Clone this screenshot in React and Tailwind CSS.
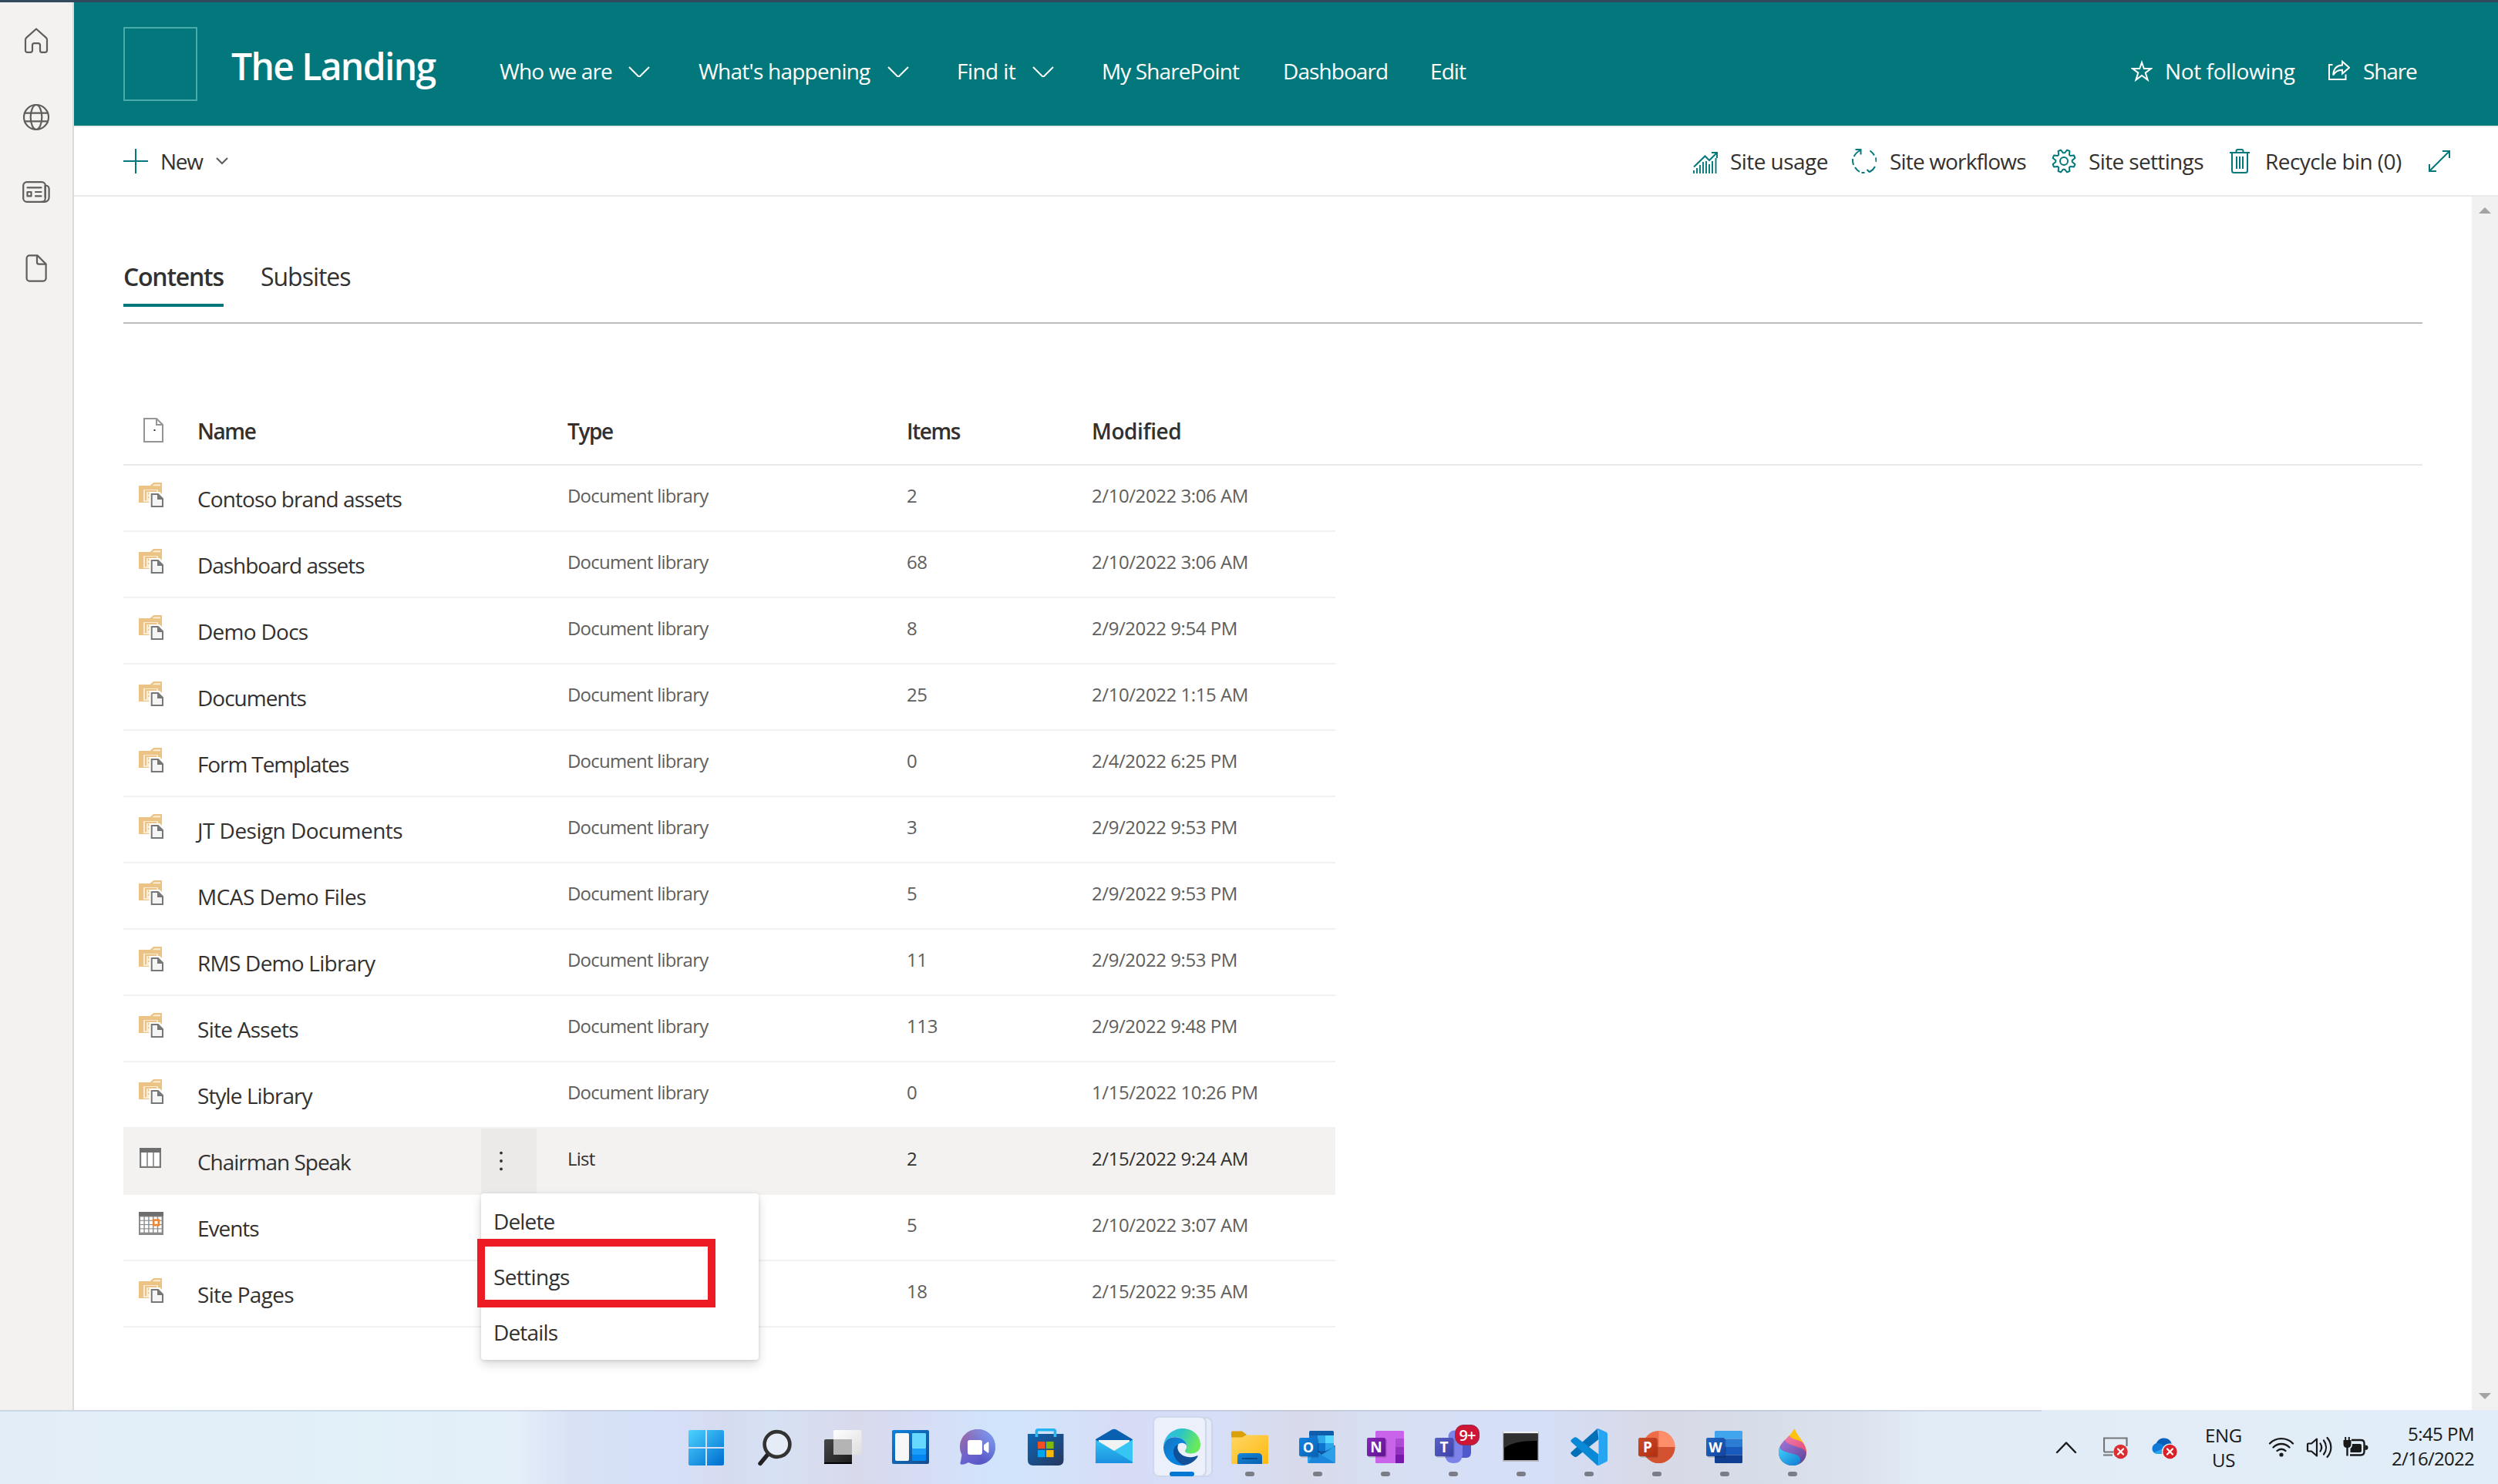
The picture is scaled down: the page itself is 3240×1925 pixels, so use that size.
const NAV = [
  { label: "Who we are", width: "w-[167px]", chevron: true, tail: "mr-[63px]", tracking: "tracking-[-0.031em]" },
  { label: "What's happening", width: "w-[245px]", chevron: true, tail: "mr-[62px]", tracking: "tracking-[-0.027em]" },
  { label: "Find it", width: "w-[98px]", chevron: true, tail: "mr-[62px]", tracking: "tracking-[-0.02em]" },
  { label: "My SharePoint", width: "w-[235px]", tracking: "tracking-[-0.032em]" },
  { label: "Dashboard", width: "w-[191px]", tracking: "tracking-[-0.033em]" },
  { label: "Edit", width: "w-[60px]", tracking: "tracking-[-0.033em]" },
];

const LIB = "Document library";
const ROWS = [
  { name: "Contoso brand assets", type: LIB, items: "2", modified: "2/10/2022 3:06 AM", tracking: "tracking-[-0.032em]" },
  { name: "Dashboard assets", type: LIB, items: "68", modified: "2/10/2022 3:06 AM", tracking: "tracking-[-0.037em]" },
  { name: "Demo Docs", type: LIB, items: "8", modified: "2/9/2022 9:54 PM", tracking: "tracking-[-0.026em]" },
  { name: "Documents", type: LIB, items: "25", modified: "2/10/2022 1:15 AM", tracking: "tracking-[-0.036em]" },
  { name: "Form Templates", type: LIB, items: "0", modified: "2/4/2022 6:25 PM", tracking: "tracking-[-0.04em]" },
  { name: "JT Design Documents", type: LIB, items: "3", modified: "2/9/2022 9:53 PM", tracking: "tracking-[-0.019em]" },
  { name: "MCAS Demo Files", type: LIB, items: "5", modified: "2/9/2022 9:53 PM", tracking: "tracking-[-0.019em]" },
  { name: "RMS Demo Library", type: LIB, items: "11", modified: "2/9/2022 9:53 PM", tracking: "tracking-[-0.027em]" },
  { name: "Site Assets", type: LIB, items: "113", modified: "2/9/2022 9:48 PM", tracking: "tracking-[-0.026em]" },
  { name: "Style Library", type: LIB, items: "0", modified: "1/15/2022 10:26 PM", tracking: "tracking-[-0.033em]" },
  { name: "Chairman Speak", type: "List", items: "2", modified: "2/15/2022 9:24 AM", tracking: "tracking-[-0.037em]", kind: "list" },
  { name: "Events", type: "Events list", items: "5", modified: "2/10/2022 3:07 AM", tracking: "tracking-[-0.037em]", kind: "events" },
  { name: "Site Pages", type: LIB, items: "18", modified: "2/15/2022 9:35 AM", tracking: "tracking-[-0.026em]" },
];

function Rail() {
  const p = { width: 40, height: 40, viewBox: "0 0 40 40", fill: "none", stroke: "#605e5c", strokeWidth: 2.2, strokeLinejoin: "round", strokeLinecap: "round" };
  return (
    <aside className="flex w-24 shrink-0 flex-col items-center border-r-2 border-[#dddbda] bg-[#f3f2f1] pt-[30px]">
      <svg {...p}>
        <path d="M20 4.5 L32.5 15.6 C33.4 16.4 34 17.5 34 18.8 V32.5 A2.3 2.3 0 0 1 31.7 34.8 H27.3 A2.3 2.3 0 0 1 25 32.5 V25.5 A2.3 2.3 0 0 0 22.7 23.2 H17.3 A2.3 2.3 0 0 0 15 25.5 V32.5 A2.3 2.3 0 0 1 12.7 34.8 H8.3 A2.3 2.3 0 0 1 6 32.5 V18.8 C6 17.5 6.6 16.4 7.5 15.6 Z" />
      </svg>
      <svg {...p} className="mt-[59px]">
        <circle cx="20" cy="20" r="16" />
        <ellipse cx="20" cy="20" rx="7.3" ry="16" />
        <path d="M5 14.7 H35 M5 25.3 H35" />
      </svg>
      <svg {...p} className="mt-[57px]">
        <rect x="3.2" y="7.2" width="28.6" height="25.6" rx="4.6" />
        <path d="M31.8 11.5 C34.5 11.8 36.6 13.2 36.6 16 V26.5 C36.6 30.4 34 32.8 30.5 32.8 H27" />
        <path d="M31.6 12 V26.5" />
        <path d="M8.5 14.3 H26.5 M19 20 H26.5 M19 25.4 H26.5" />
        <rect x="8.5" y="20" width="5" height="5.4" />
      </svg>
      <svg {...p} className="mt-[59px]">
        <path d="M11.2 3.4 H21.5 L32.6 14.5 V33 A3.6 3.6 0 0 1 29 36.6 H11.2 A3.6 3.6 0 0 1 7.6 33 V7 A3.6 3.6 0 0 1 11.2 3.4 Z" />
        <path d="M21 3.8 V12.2 A2.4 2.4 0 0 0 23.4 14.6 H32.2" />
      </svg>
    </aside>
  );
}

function SiteHeader() {
  return (
    <header className="flex h-[162px] items-center justify-between border-b-2 border-[#eaeaea] bg-[#03787c] pr-[105px] pl-16 text-[28px] text-white">
      <div className="flex items-center">
        <div className="size-24 border-2 border-[#4aabac]" />
        <h1 className="ml-[44px] w-[348px] pt-[5px] text-[48px] leading-[60px] font-semibold tracking-[-0.034em] whitespace-nowrap">The Landing</h1>
        <nav className="flex items-center pt-[18px] leading-10 whitespace-nowrap">
          {NAV.map((n) => (
            <div key={n.label} className="flex items-center">
              <span className={`${n.width} ${n.tracking}`}>{n.label}</span>
              {n.chevron && (
                <svg className={n.tail} width="28" height="16" viewBox="0 0 28 16" fill="none" stroke="#fff" strokeWidth="2">
                  <path d="M1 2 L14 15 L27 2" transform="translate(0 1)" />
                </svg>
              )}
            </div>
          ))}
        </nav>
      </div>
      <div className="grid grid-cols-[44px_212px_45px_70px] items-center pt-[18px] leading-10 whitespace-nowrap">
        <svg width="28" height="28" viewBox="0 0 28 28" fill="none" stroke="#fff" strokeWidth="2">
          <path d="M14 3 L16.8 11 H26 L18.7 16.4 L21.6 25.6 L14 20 L6.4 25.6 L9.3 16.4 L2 11 H11.2 Z" />
        </svg>
        <span className="tracking-[-0.014em]">Not following</span>
        <svg width="28" height="28" viewBox="0 0 28 28" fill="none" stroke="#fff" strokeWidth="2">
          <path d="M5.5 6 H1 V25 H22.5 V18.5" />
          <path d="M18 1.8 L27 9.8 L18 17.5 V12.8 C12.5 12.5 9 15 6.2 19.5 C6.6 12 10.5 7 18 6.6 Z" />
        </svg>
        <span className="tracking-[-0.04em]">Share</span>
      </div>
    </header>
  );
}

function CommandBar() {
  const p = { width: 32, height: 32, viewBox: "0 0 32 32", fill: "none", stroke: "#03787c", strokeWidth: 2 };
  return (
    <div className="flex h-[90px] items-center justify-between border-b-2 border-[#eaeaea] pr-[60px] pl-16 text-[28px] leading-10 whitespace-nowrap text-[#323130]">
      <div className="flex items-center">
        <svg {...p}><path d="M16 0 V32 M0 16 H32" /></svg>
        <span className="ml-[16px] w-[72px] tracking-[-0.045em]">New</span>
        <svg width="16" height="10" viewBox="0 0 16 10" fill="none" stroke="#605e5c" strokeWidth="2.2"><path d="M1 1 L8 8 L15 1" /></svg>
      </div>
      <div className="grid grid-cols-[48px_158px_49px_210px_48px_180px_49px_210px_32px] items-center">
        <svg {...p}>
          <path d="M1 23.5 L15.5 9.5 L21 15 L30.5 5.5 M24 5 H31 V12" />
          <path d="M1 28 V32 M5 25 V32 M9 21 V32 M13 17 V32 M17 16 V32 M21 20 V32 M25 16 V32 M29.5 12 V32" strokeWidth="1.9" />
        </svg>
        <span className="tracking-[-0.02em]">Site usage</span>
        <svg {...p}>
          <path d="M4.5 1 H11.5 V7.5 M11.5 1.5 C7 4 4 7 2.6 10" />
          <path d="M1.2 13 C.8 16 1.2 18.5 2 21 M4 24 C5.5 26.5 7.5 28.5 10 29.8 M12.5 31 H16.5 M19.5 27 L23 30.5 M23 30 C26 28.5 28.5 26 30 23 M31.5 17 C31.6 15 31.4 13.5 31 11.5 M29 8.5 C27.5 6 26 4.3 23.5 2.5" />
        </svg>
        <span className="tracking-[-0.03em]">Site workflows</span>
        <svg {...p}>
          <circle cx="16" cy="16" r="5" />
          <path d="M12 1.6 L15 5.3 H17 L20 1.6 L23.4 3 L22.9 7.7 L24.3 9.1 L29 8.6 L30.4 12 L26.7 15 V17 L30.4 20 L29 23.4 L24.3 22.9 L22.9 24.3 L23.4 29 L20 30.4 L17 26.7 H15 L12 30.4 L8.6 29 L9.1 24.3 L7.7 22.9 L3 23.4 L1.6 20 L5.3 17 V15 L1.6 12 L3 8.6 L7.7 9.1 L9.1 7.7 L8.6 3 Z" strokeLinejoin="round" />
        </svg>
        <span className="tracking-[-0.023em]">Site settings</span>
        <svg {...p}>
          <path d="M3 5 H29 M11.5 5 V3 Q11.5 1 13.5 1 H18.5 Q20.5 1 20.5 3 V5 M6 5 V28.5 Q6 31 8.5 31 H23.5 Q26 31 26 28.5 V5 M12 10 V26 M16 10 V26 M20 10 V26" />
        </svg>
        <span className="tracking-[-0.02em]">Recycle bin (0)</span>
        <svg {...p}><path d="M3 29 L29 3 M20 3 H29 V12 M3 20 V29 H12" /></svg>
      </div>
    </div>
  );
}

function LibraryIcon() {
  return (
    <svg width="32" height="32" viewBox="0 0 32 32">
      <path d="M0 4 H14.5 L19 0 H30 V26 H0 Z" fill="#ebc384" />
      <path d="M17.5 4.2 L20 2.2 H28 V4.2 Z" fill="#fbeed8" />
      <path d="M6 9 H25 V14 H14 V25 H6 Z" fill="#faecd3" />
      <path d="M9 23 V11 H23" fill="none" stroke="#ebc384" strokeWidth="2" />
      <path d="M12 13 H14.5 V15.5 H12 Z M16 13 H18 V15 H16 Z M12 18 H14 V20 H12 Z" fill="#ebc384" />
      <path d="M13.5 32 V12 H27 L32 17 V32 Z" fill="#fff" />
      <path d="M16.7 15 H25 L31 21 V31 H16.7 Z" fill="#f6f5f5" stroke="#777" strokeWidth="2" />
      <path d="M24 15 V22 H31 Z" fill="#777" />
    </svg>
  );
}

function ListIcon() {
  return (
    <svg width="28" height="26" viewBox="0 0 28 26" className="mt-[3px] ml-px">
      <rect x="1" y="1" width="26" height="24" fill="#fff" stroke="#7a7a7a" strokeWidth="2.4" />
      <rect width="28" height="6" fill="#6e6e6e" />
      <path d="M10 6 V24 M18 6 V24" stroke="#9b9b9b" strokeWidth="2" />
    </svg>
  );
}

function EventsIcon() {
  return (
    <svg width="32" height="30" viewBox="0 0 32 30">
      <rect width="32" height="30" fill="#8b8b8b" />
      <rect width="32" height="5.5" fill="#6e6e6e" />
      {[6.5, 11.8, 17.1, 22.4].map((y) => [2, 7.8, 13.6, 19.4, 25.2].map((x) => <rect key={`${x}-${y}`} x={x} y={y} width="4.4" height="4.2" fill="#fff" />))}
      <rect x="19.2" y="10.6" width="6.6" height="6.6" fill="#fff" stroke="#ee8533" strokeWidth="2.6" />
    </svg>
  );
}

function ContextMenu() {
  return (
    <div className="absolute top-[84px] left-0 z-10 w-[360px] rounded bg-white text-[28px] leading-[72px] text-[#323130] shadow-[0_6px_14px_rgba(0,0,0,0.14),0_1px_4px_rgba(0,0,0,0.12)]">
      <div className="pl-4 tracking-[-0.03em]">Delete</div>
      <div className="pl-4 tracking-[-0.023em]">Settings</div>
      <div className="pl-4 tracking-[-0.03em]">Details</div>
      <div className="absolute top-[59px] left-[-5px] h-[89px] w-[309px] border-10 border-[#ed1c24]" />
    </div>
  );
}

function Row({ row }) {
  const active = row.kind === "list";
  return (
    <div className={`grid h-[86px] w-[1572px] grid-cols-[96px_480px_440px_240px_316px] border-b-2 border-[#f3f2f1] whitespace-nowrap ${active ? "bg-[#f3f2f1] text-[#323130]" : "text-[#605e5c]"}`}>
      <div className="pt-[22px] pl-5">{active ? <ListIcon /> : row.kind === "events" ? <EventsIcon /> : <LibraryIcon />}</div>
      <div className="flex">
        <span className={`w-[368px] pt-px text-[28px] leading-[84px] text-[#323130] ${row.tracking}`}>{row.name}</span>
        {active && (
          <div className="relative flex h-[84px] w-[72px] items-center justify-center bg-[#ebeae9] pr-[20px]">
            <svg width="6" height="26" viewBox="0 0 6 26" fill="#323130"><circle cx="3" cy="2.6" r="1.9" /><circle cx="3" cy="13" r="1.9" /><circle cx="3" cy="23.4" r="1.9" /></svg>
            <ContextMenu />
          </div>
        )}
      </div>
      <span className="text-[24px] leading-[78px] tracking-[-0.033em]">{row.type}</span>
      <span className="text-[24px] leading-[78px] tracking-[-0.015em]">{row.items}</span>
      <span className="text-[24px] leading-[78px] tracking-[-0.018em]">{row.modified}</span>
    </div>
  );
}

function Contents() {
  return (
    <main className="flex-1 pt-[67px] pr-16 pl-16 text-[#323130]">
      <div className="flex h-[98px] gap-12 border-b-2 border-[#bcbcbc] text-[32px] leading-[73px]">
        <div className="h-[76px] w-[130px] border-b-4 border-[#03787c] font-semibold tracking-[-0.039em]">Contents</div>
        <div className="tracking-[-0.032em]">Subsites</div>
      </div>
      <div className="mt-[94px] grid h-[90px] grid-cols-[96px_480px_440px_240px_1fr] items-center border-b-2 border-[#eaeaea] text-[28px] font-semibold">
        <svg className="ml-[26px]" width="26" height="32" viewBox="0 0 26 32" fill="none" stroke="#979593" strokeWidth="2">
          <path d="M1 1 H17 L25 9 V31 H1 Z M17 1 V9 H25" />
          <rect x="13.5" y="15" width="2" height="2" fill="#323130" stroke="none" />
        </svg>
        <span className="pt-px tracking-[-0.05em]">Name</span>
        <span className="pt-px tracking-[-0.05em]">Type</span>
        <span className="pt-px tracking-[-0.05em]">Items</span>
        <span className="pt-px tracking-[-0.015em]">Modified</span>
      </div>
      {ROWS.map((r) => <Row key={r.name} row={r} />)}
    </main>
  );
}

function Scrollbar() {
  return (
    <div className="flex w-[34px] flex-col items-center justify-between bg-[#f1f1f1] pt-[14px] pb-[14px]">
      <svg width="16" height="8"><path d="M8 0 L16 8 H0 Z" fill="#a3a3a3" /></svg>
      <svg width="16" height="8"><path d="M0 0 H16 L8 8 Z" fill="#a3a3a3" /></svg>
    </div>
  );
}

const G = ({ id, c, x2 = 1, y2 = 1 }) => (
  <linearGradient id={id} x1="0" y1="0" x2={x2} y2={y2}>
    {c.map((k, i) => <stop key={i} offset={i / (c.length - 1)} stopColor={k} />)}
  </linearGradient>
);

function Tile({ id, c, letter, size = 19 }) {
  return (
    <>
      <defs><G id={id} c={c} /></defs>
      <rect x="1.5" y="13.5" width="24" height="24" rx="2" fill="#000" opacity=".22" />
      <rect x="0" y="12" width="24" height="24" rx="2" fill={`url(#${id})`} />
      <text x="12" y="31" textAnchor="middle" fontFamily="Open Sans, sans-serif" fontWeight="700" fontSize={size} fill="#fff">{letter}</text>
    </>
  );
}

const APPS = [
  { name: "start", art: <><defs><linearGradient id="win" gradientUnits="userSpaceOnUse" x1="1" y1="2" x2="40" y2="46"><stop offset="0" stopColor="#4cd2ff" /><stop offset="1" stopColor="#0474d2" /></linearGradient></defs><path d="M2 2 H22 V24 H0 V4 Q0 2 2 2 Z M24 2 H44 Q46 2 46 4 V24 H24 Z M0 26 H22 V48 H2 Q0 48 0 46 Z M24 26 H46 V46 Q46 48 44 48 H24 Z" fill="url(#win)" /></> },
  { name: "search", art: <><path d="M17 31 L5 45.5" stroke="#222" strokeWidth="5.4" strokeLinecap="round" /><circle cx="27" cy="20.5" r="16.4" fill="#e6ebf8" stroke="#333231" strokeWidth="4.6" /></> },
  { name: "taskview", art: <><defs><G id="tv1" c={["#484848", "#1c1c1c"]} /><G id="tv2" c={["#ffffff", "#dedede"]} /></defs><rect y="14" width="36" height="32" rx="2" fill="url(#tv1)" /><rect y="44" width="36" height="2" fill="#000" /><rect x="12" y="2" width="36.5" height="32" rx="2" fill="url(#tv2)" /><rect x="12" y="14" width="24" height="20" fill="#b4b4b4" /></> },
  { name: "widgets", art: <><defs><G id="wd" c={["#0a83dd", "#174a8c"]} /></defs><rect y="2" width="48" height="44" rx="2" fill="url(#wd)" /><rect x="4" y="6" width="18" height="36" rx="2" fill="#f7f7f7" /><rect x="26" y="6" width="18" height="20" rx="1" fill="#67d8ff" /><rect x="26" y="26" width="18" height="8" fill="#1b9ef9" /><rect x="26" y="34" width="18" height="8" rx="1" fill="#0086ee" /></> },
  { name: "chat", art: <><defs><linearGradient id="ch" x1="0" y1=".2" x2=".7" y2="1"><stop offset="0" stopColor="#9a69a8" /><stop offset=".55" stopColor="#6a63cf" /><stop offset="1" stopColor="#5455c4" /></linearGradient><linearGradient id="ch2" x1="0" y1=".8" x2="1" y2="0"><stop offset=".35" stopColor="#7ea3f4" stopOpacity="0" /><stop offset="1" stopColor="#7ea3f4" /></linearGradient></defs><path d="M23 1 C36 1 46 11 46 24 C46 37 36 47 23 47 C18 47 14 45.5 11 44 C8 46 4 47 1.5 46.5 C0 46 .5 44 1 43 L2.5 34 C1 31 0 28 0 24 C0 11 10 1 23 1 Z" fill="url(#ch)" /><circle cx="23" cy="24" r="23" fill="url(#ch2)" /><rect x="10" y="15" width="19" height="19" rx="3" fill="#fff" /><path d="M31 21.5 L36 17.5 Q37.5 17 37.5 18.5 V30.5 Q37.5 32 36 31.5 L31 27.5 Z" fill="#fff" /></> },
  { name: "store", art: <><defs><G id="st" c={["#0e66b4", "#27375e"]} /></defs><path d="M11.5 11 V3.5 Q11.5 1.7 13.5 1.7 H33.5 Q35.5 1.7 35.5 3.5 V11" fill="none" stroke="#22b4f5" strokeWidth="3.6" /><path d="M0 7 H46.5 V41 Q46.5 48 39.5 48 H7 Q0 48 0 41 Z" fill="url(#st)" /><path d="M11.5 7 V11 M35.5 7 V11" stroke="#2cc0f2" strokeWidth="3.6" /><rect x="13" y="17" width="9.6" height="9.2" fill="#f25022" /><rect x="24" y="17" width="9.6" height="9.2" fill="#7fba00" /><rect x="13" y="28" width="9.6" height="9.2" fill="#00a4ef" /><rect x="24" y="28" width="9.6" height="9.2" fill="#ffb900" /></> },
  { name: "mail", art: <><defs><G id="ml" c={["#35c4f3", "#1a8fe0"]} x2={0} /></defs><path d="M0 14 L21 1.5 Q24 0 27 1.5 L48 14 V20 H0 Z" fill="#0a60b0" /><path d="M4 15 H44 V18 L24 32 L4 18 Z" fill="#f1f2f3" /><path d="M48 14.5 V45 H0 V30 L24 29 Z" fill="#37c6f4" /><path d="M0 14.5 L48 43.5 V45 H0 Z" fill="url(#ml)" /></> },
  { name: "edge", active: true, art: <><defs><G id="eg1" c={["#35b8f2", "#2cc6c4", "#69e95c"]} y2={0.3} /><G id="eg2" c={["#1a6fb8", "#0a86e0", "#0078d4"]} /><G id="eg3" c={["#0c4f98", "#14529a"]} /></defs><path d="M0 23 C1 10 11 0 25 0 C38 0 48 9 48 21 C48 28.5 43 32.5 36 32.5 C31 32.5 28 31 28 29.3 C28 28 30 27 30 23.5 C30 18 25 11 15 11 C9 11 3 15 0 23 Z" fill="url(#eg1)" /><path d="M0 24 C2 15 8 11.2 15 11.2 C24 11.2 29.8 17 30 22 C27.5 18.5 22 17.5 18.5 21 C14 26 19 40 31 46.8 C28.5 47.7 26.5 48 24 48 C10 48 0 37 0 24 Z" fill="url(#eg2)" /><path d="M19.5 20.5 C13 23 11.5 30 14.5 36.5 C18 44.5 25 48.5 31.5 46.8 C38 44.5 42 40.5 44.5 36.5 C45 35.3 44.3 35 43.3 35.4 C34 39.5 22 36.5 18.8 27.5 C18 25 18.3 22.5 19.5 20.5 Z" fill="url(#eg3)" /></> },
  { name: "files", dot: true, art: <><defs><G id="fl" c={["#ffd766", "#fdb90e"]} /><G id="fb" c={["#1387dc", "#0a60ae"]} /></defs><path d="M0 5 Q0 3.5 1.5 3.5 H14 L20 8 L14 13 H0 Z" fill="#dba006" /><path d="M0 11.5 H14 L19.5 8.5 H46.5 Q48 8.5 48 10 V44.5 Q48 46 46.5 46 H1.5 Q0 46 0 44.5 Z" fill="url(#fl)" /><path d="M8 46 V37 Q8 32 13 32 H35 Q40 32 40 37 V46 Z" fill="url(#fb)" /><rect x="14" y="38" width="20" height="2" fill="#094a8c" /></> },
  { name: "outlook", dot: true, art: <><rect x="13" y="3" width="32" height="30" rx="1.5" fill="#0f5dab" /><rect x="13" y="9" width="11" height="10" fill="#1471c6" /><rect x="24" y="9" width="10" height="10" fill="#2fa8ea" /><rect x="34" y="9" width="11" height="10" fill="#57d9ff" /><rect x="24" y="19" width="10" height="10" fill="#0d75d0" /><rect x="34" y="19" width="11" height="10" fill="#2ba6ea" /><path d="M11 25 L29 33 L47 22 V43.5 Q47 45 45.5 45 H12.5 Q11 45 11 43.5 Z" fill="#2b9fe8" /><path d="M20 29 L47 45 H12 Z" fill="#1c86dc" /><path d="M22 27 L29 32 L45 24 V22 L47 22.5 L29 34 Z" fill="#0d4f99" /><Tile id="to" c={["#1683df", "#0562b6"]} letter="O" size={18} /></> },
  { name: "onenote", dot: true, art: <><rect x="11" y="3" width="37" height="42" rx="1.5" fill="#c964ea" /><rect x="37" y="13" width="11" height="11" fill="#ae4bd5" /><rect x="37" y="24" width="11" height="10" fill="#9332bf" /><path d="M37 34 H48 V43.5 Q48 45 46.5 45 H37 Z" fill="#7719aa" /><Tile id="tn" c={["#8a28b8", "#5e1391"]} letter="N" /></> },
  { name: "teams", dot: true, badge: true, art: <><circle cx="25" cy="10" r="7.5" fill="#7b83eb" /><path d="M34 17 H47 V31 Q47 38 41 38 H34 Z" fill="#5059c9" /><path d="M13 17 H36 V32 Q36 45 24.5 45 Q13 45 13 32 Z" fill="#7b83eb" /><Tile id="tt" c={["#5a62c6", "#3b41a8"]} letter="T" /></> },
  { name: "terminal", dot: true, art: <><rect y="4" width="47" height="39" fill="#b5b7bd" /><rect x="1" y="4" width="45" height="2.5" fill="#f2f2f2" /><rect x="1.5" y="6.5" width="44" height="34.5" fill="#000" /><path d="M1.5 6.5 H45.5 V16 C28 15.5 10 18 1.5 26 Z" fill="#303030" /></> },
  { name: "code", dot: true, art: <><path d="M35 0 L36.5 14 L9 36 Q6.5 38 4 36 L1 33.5 Q-.5 32 1 30.5 Z" fill="#0170b8" /><path d="M1 14.5 L4.5 11.7 Q6.5 10.5 8.5 12 L36.5 33.5 V48 Q34 48 32.5 46 L1 17.5 Q-.5 16 1 14.5 Z" fill="#0a8ad6" /><path d="M32.5 1.5 Q34 0 36.5 .3 L46.5 4.7 Q48 5.5 48 7 V41 Q48 42.5 46.5 43.2 L37 47.7 Q34.5 48.5 33 47 Q36.5 47 36.5 44 V4 Q36 1 32.5 1.5 Z" fill="#27a4f2" /></> },
  { name: "powerpoint", dot: true, art: <><circle cx="26.5" cy="24" r="21" fill="#ed6c47" /><path d="M26.5 3 A21 21 0 0 1 47.5 24 H26.5 Z" fill="#ff8f6b" /><path d="M5.5 24 H47.5 A21 21 0 0 1 5.5 24 Z" fill="#d35230" /><Tile id="tp" c={["#ca4c28", "#b02f10"]} letter="P" /></> },
  { name: "word", dot: true, art: <><path d="M11 13.5 V4.5 Q11 3 12.5 3 H45.5 Q47 3 47 4.5 V13.5 Z" fill="#41a5ee" /><rect x="11" y="13.5" width="36" height="10.5" fill="#2b7cd3" /><rect x="11" y="24" width="36" height="10.5" fill="#185abd" /><path d="M11 34.5 H47 V43.5 Q47 45 45.5 45 H12.5 Q11 45 11 43.5 Z" fill="#103f91" /><Tile id="tw" c={["#2368c4", "#1144a0"]} letter="W" size={18} /></> },
  { name: "paint", dot: true, art: <><defs><clipPath id="drop"><path d="M27 0 C28 8 42 18 42 31 C42 41 34 48 24 48 C14 48 6 41 6 31 C6 22 13 16 18 11 C22 7 24 4 27 0 Z" /></clipPath><G id="pr" c={["#f08cc0", "#e3406a"]} /><G id="pp" c={["#a97fe4", "#5b3f94"]} /><G id="pb" c={["#4bdcff", "#0d78d4"]} /></defs><g clipPath="url(#drop)"><rect width="48" height="48" fill="#ffc20e" /><path d="M20 7 C19 15 35 14 38 19 L48 34 L0 30 V10 Z" fill="url(#pr)" /><path d="M14 13 C13 24 42 22 42 33 V48 H0 V18 Z" fill="url(#pp)" /><path d="M7 23 C8 34 34 30 34 40 C34 44 32 48 28 50 H0 V24 Z" fill="url(#pb)" /></g></> },
];

function AppButton({ app }) {
  return (
    <div className="relative flex h-[94px] w-[88px] flex-col items-center pt-[22px]">
      {app.active && (
        <>
          <div className="absolute top-[7px] left-[20px] h-[78px] w-[64px] rounded-lg border-2 border-[#cdd5ea] bg-[#e6ebfa]" />
          <div className="absolute top-[6px] left-[6px] h-[79px] w-[70px] rounded-lg border-2 border-[#cfd7ec] bg-[#ebf0fb]" />
        </>
      )}
      <svg width="48" height="48" viewBox="0 0 48 48" className="relative shrink-0 overflow-visible">{app.art}</svg>
      {app.dot && <div className="mt-2 h-1.5 w-3 rounded-full bg-[#7a7d86]" />}
      {app.active && <div className="relative mt-2 h-1.5 w-8 rounded-full bg-[#0078d4]" />}
      {app.badge && (
        <div className="absolute top-[17px] left-[46px] flex h-[27px] w-8 items-center justify-center rounded-[11px] border border-[#8f3050] bg-[#cf1535] text-[20px] leading-none font-semibold tracking-[-0.05em] text-white">9+</div>
      )}
    </div>
  );
}

const X = ({ cx, cy, c }) => (
  <g>
    <circle cx={cx} cy={cy} r="9.2" fill={c} />
    <path d={`M${cx - 3.5} ${cy - 3.5} l7 7 m0 -7 l-7 7`} stroke="#fff" strokeWidth="2.2" strokeLinecap="round" />
  </g>
);

function Taskbar() {
  const s = { fill: "none", stroke: "#191919", strokeWidth: 2.4, strokeLinecap: "round", strokeLinejoin: "round" };
  return (
    <footer className="flex h-24 flex-col bg-[linear-gradient(90deg,#e3edf7_0px,#e2f0f8_480px,#e4eff9_670px,#dae1f5_740px,#d6e1f6_800px,#d6dff8_880px,#d6dcf0_940px,#d6e1f3_1000px,#d8daec_1110px,#d7dcf4_1180px,#d0e4fb_1290px,#d3e2f9_1370px,#d7dcf6_1450px,#d6dff7_1580px,#d8daea_1690px,#d7dff2_1780px,#d5dff8_1990px,#d8d9e6_2150px,#d6dce8_2260px,#dbe2ee_2400px,#e2ecf6_2500px,#e1edf8_3240px)]">
      <div className="h-0.5 w-[2648px] bg-[#8c9bb5] opacity-25" />
      <div className="flex h-[94px] items-center">
        <div className="ml-[873px] flex">{APPS.map((a) => <AppButton key={a.name} app={a} />)}</div>
        <div className="ml-[297px] grid grid-cols-[62px_62px_70px_82px_49px_48px_62px] items-center">
          <svg width="28" height="16" viewBox="0 0 28 16" {...s}><path d="M2 14 L14 1.5 L26 14" /></svg>
          <svg width="34" height="32" viewBox="0 0 34 32"><path d="M1 21.5 V3.5 H30.5 V14 M1 21.5 H13 M0 25.5 H12" fill="none" stroke="#747678" strokeWidth="2.2" /><X cx={22.5} cy={21} c="#dc2d32" /></svg>
          <svg width="36" height="32" viewBox="0 0 36 32"><path d="M6 12 C8 6 12 3.5 17 3.5 C23 3.5 26 7.5 27 12 L20 18 Z" fill="#0a5fb8" /><path d="M9 24 C4 24 1.5 21 1.5 17 C1.5 13 4.5 10 8.5 10 C12 10 14 11.5 16 13.5 L22 17 L14 24 Z" fill="#0f7ad8" /><path d="M4 22 L16 17 L24 16 V24 H9 C7 24 5.5 23.5 4 22 Z" fill="#28a8ea" /><circle cx="24.5" cy="21" r="10.6" fill="#e6eef7" /><X cx={24.5} cy={21} c="#d9222a" /></svg>
          <div className="w-[48px] text-center text-[24px] leading-8 tracking-[-0.012em] text-[#191919]">ENG<br />US</div>
          <svg width="34" height="30" viewBox="0 0 34 30" {...s}><path d="M2 9.5 C10 1 24 1 32 9.5 M6.5 14.5 C12.5 8.5 21.5 8.5 27.5 14.5 M11.5 19 C14.5 16 19.5 16 22.5 19" /><circle cx="17" cy="24" r="2.6" fill="#191919" stroke="none" /></svg>
          <svg width="34" height="30" viewBox="0 0 34 30" {...s} strokeWidth="2.2"><path d="M2 10.5 V18.5 Q2 19.5 3 19.5 H7 L14 25.5 V3.5 L7 9.5 H3 Q2 9.5 2 10.5 Z" /><path d="M18.5 9.5 C20.5 12.5 20.5 16.5 18.5 19.5 M23 5.5 C27 11 27 18 23 23.5 M27.5 2 C34 9.5 34 19.5 27.5 27" /></svg>
          <svg width="34" height="32" viewBox="0 0 34 32"><path d="M11 6 H23 Q27.5 6 27.5 10 V21 Q27.5 25.5 23 25.5 H9" fill="none" stroke="#191919" strokeWidth="2.4" /><path d="M12 11 H22 Q24 11 24 13 V20 Q24 22 22 22 H9.5 V17 Q12 15.5 12 11 Z" fill="#191919" /><path d="M28.5 12.5 Q32.5 12.5 32.5 15.8 Q32.5 19 28.5 19 Z" fill="#191919" /><path d="M.5 6 H10.5 V11 Q10.5 15.5 6.7 16 V26.5 H4.3 V16 Q.5 15.5 .5 11 Z M2.2 2 H4.2 V6 H2.2 Z M6.8 2 H8.8 V6 H6.8 Z" fill="#191919" /></svg>
        </div>
        <div className="ml-auto -mt-1 pr-[31px] text-right text-[24px] leading-8 text-[#191919]">
          <div className="tracking-[-0.022em]">5:45 PM</div>
          <div className="tracking-[-0.031em]">2/16/2022</div>
        </div>
      </div>
    </footer>
  );
}

export default function App() {
  return (
    <div className="flex h-[1925px] w-[3240px] flex-col overflow-hidden bg-white font-['Open_Sans','Noto_Sans',sans-serif]">
      <div className="h-[3px] bg-[#33495c]" />
      <div className="flex min-h-0 flex-1">
        <Rail />
        <div className="flex min-w-0 flex-1 flex-col">
          <SiteHeader />
          <CommandBar />
          <div className="flex min-h-0 flex-1">
            <Contents />
            <Scrollbar />
          </div>
        </div>
      </div>
      <Taskbar />
    </div>
  );
}
